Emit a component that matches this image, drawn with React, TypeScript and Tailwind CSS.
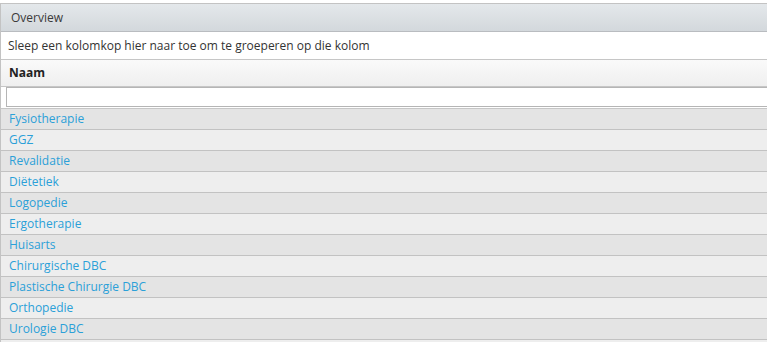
const rows = [
  "Fysiotherapie",
  "GGZ",
  "Revalidatie",
  "Diëtetiek",
  "Logopedie",
  "Ergotherapie",
  "Huisarts",
  "Chirurgische DBC",
  "Plastische Chirurgie DBC",
  "Orthopedie",
  "Urologie DBC",
  "",
];

export default function App() {
  return (
    <div className="h-[342px] w-[767px] overflow-hidden bg-white pt-[3px] font-['Open_Sans',sans-serif] text-[12px] text-[#333]">
      <div className="w-[800px] border-l border-t border-[#c3c3c3]">
        {/* Panel title */}
        <div className="flex h-[28px] items-center border-b border-[#b9bcc0] bg-gradient-to-b from-[#e4e8eb] to-[#d3d8dc] pl-[10px] text-[12px] text-[#3a3a3a]">
          Overview
        </div>

        {/* Group panel */}
        <div className="flex h-[28px] items-center border-b border-[#c6c6c6] bg-white pl-[7px]">
          Sleep een kolomkop hier naar toe om te groeperen op die kolom
        </div>

        {/* Column header */}
        <div className="flex h-[27px] items-center border-b border-[#c6c6c6] bg-gradient-to-b from-[#fafafa] to-[#efefef] pl-[8px] font-bold text-[#222]">
          Naam
        </div>

        {/* Filter row */}
        <div className="flex h-[21px] items-start bg-white pl-[5px]">
          <input className="h-[20px] w-full border border-[#b5b5b5] bg-white outline-none" />
        </div>

        {/* Data rows */}
        <div className="border-t border-[#c6c6c6]">
          {rows.map((name, i) => (
            <div
              key={i}
              className={
                i % 2 === 0
                  ? "flex h-[21px] items-center border-b border-[#c2c2c2] bg-[#e4e4e4] pl-[8px] text-[#2ba0d8]"
                  : "flex h-[21px] items-center border-b border-[#c2c2c2] bg-[#eeeeee] pl-[8px] text-[#2ba0d8]"
              }
            >
              {name}
            </div>
          ))}
        </div>
      </div>
    </div>
  );
}
